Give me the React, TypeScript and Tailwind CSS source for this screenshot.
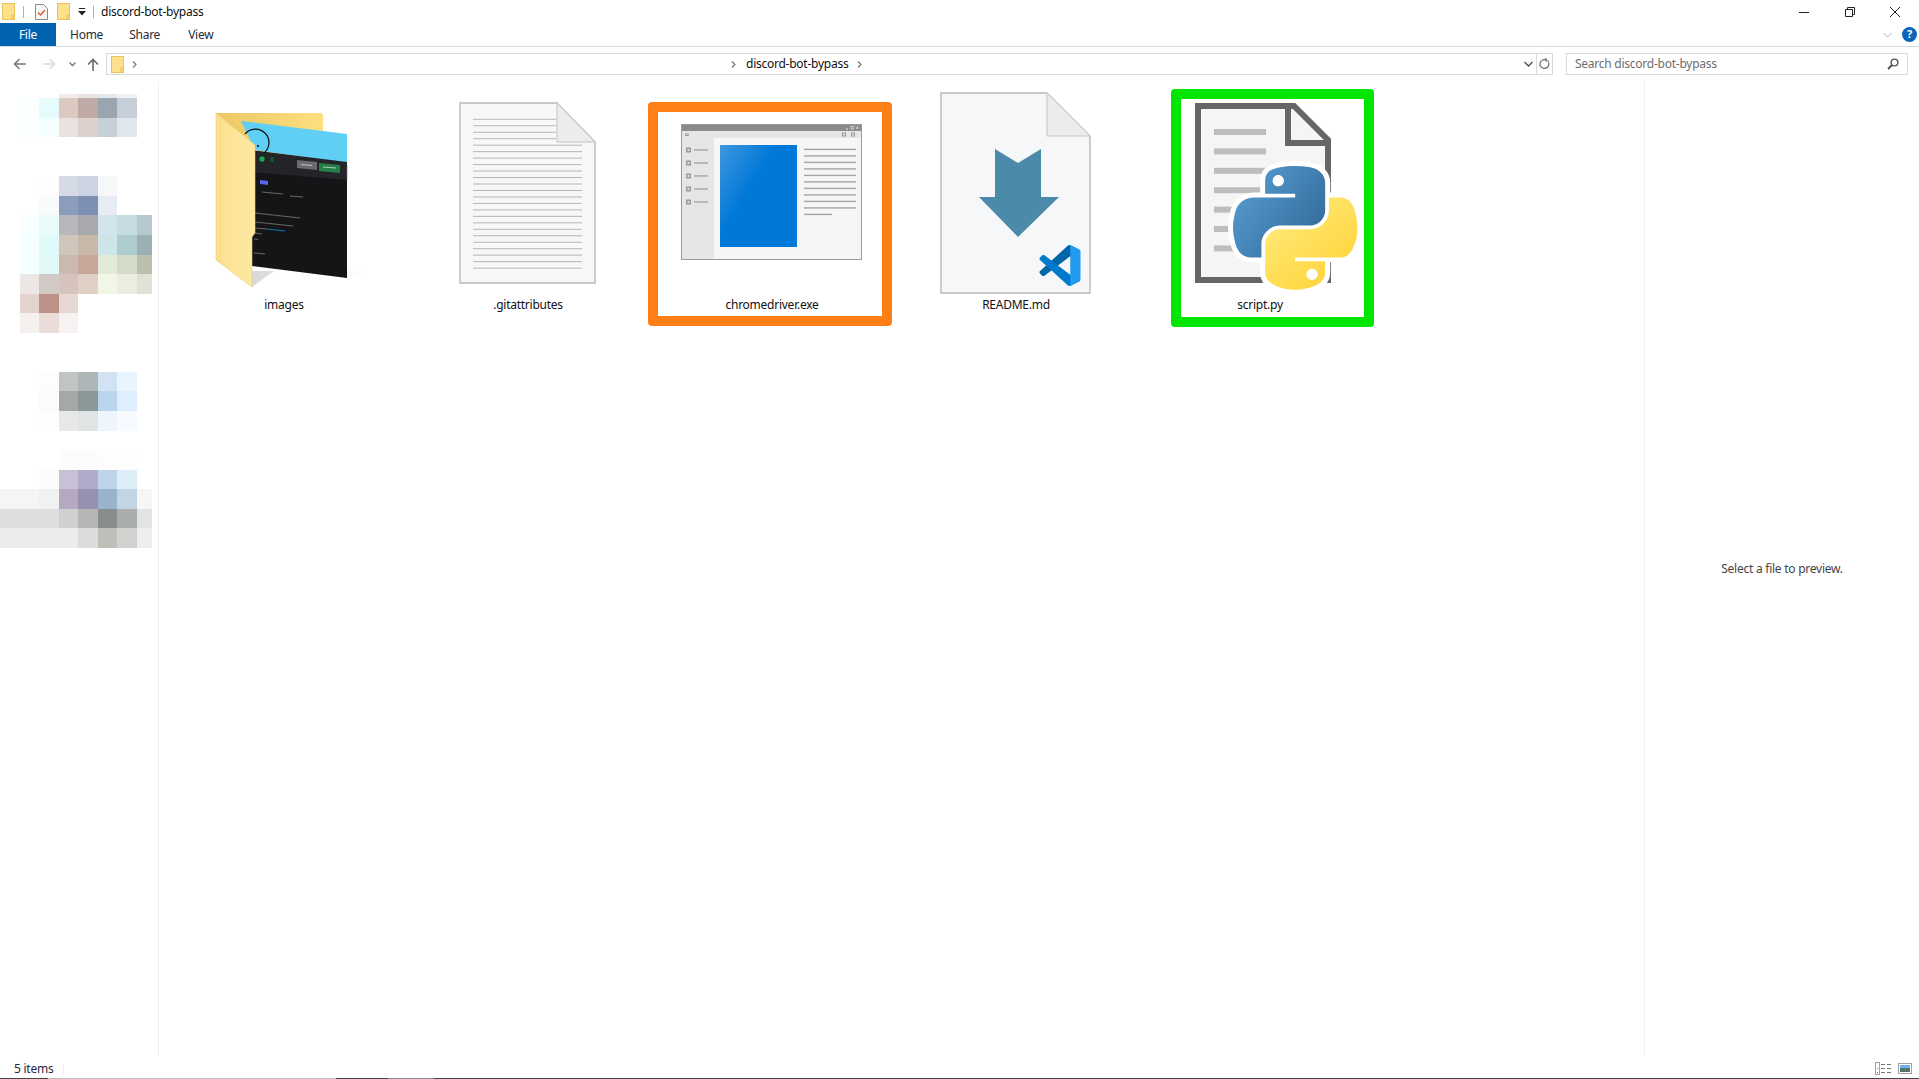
import React from 'react';

// pixelated sidebar: first column is x 0-20, then blocks of ~19.5px
const BLUR_ROWS: string[][] = [
  ['', '', '', '#f3ebe8', '#eae3df', '#e4e8ec', '#f0f1f5', ''],
  ['', '#fbffff', '#e6fbfb', '#dcc9c2', '#bfaaa5', '#9aa5b0', '#c6ced8', ''],
  ['', '#fcffff', '#f5ffff', '#eae2de', '#dcd1cd', '#c8d0d7', '#e0e6ea', ''],
  [],
  [],
  ['', '', '#fdfdfd', '#d5dae6', '#ccd3e2', '#f5f7fb', '', ''],
  ['', '', '#f9fafc', '#8c9cbc', '#7d8fb2', '#e7ebf3', '', ''],
  ['', '#f8ffff', '#e8fbfa', '#b6b8ba', '#a8a9ad', '#d2e5ee', '#c6dce3', '#b5c8cf'],
  ['', '#f5ffff', '#e0fafa', '#d0c6bc', '#c8b8aa', '#cde4e8', '#aecbd0', '#9ab0b3'],
  ['', '#f5ffff', '#e2f9fa', '#cbb8ae', '#c7a898', '#e2ebd7', '#d3dcc6', '#babfae'],
  ['', '#ece6e4', '#d2c9c4', '#d7c3be', '#e1d0c5', '#f2f6e7', '#ebede1', '#e1e2d6'],
  ['', '#e4d4ce', '#bd9288', '#e7d8d6', '', '', '', ''],
  ['', '#f6f1ef', '#eadcd9', '#f7f1f1', '', '', '', ''],
  [],
  [],
  ['', '', '#fdfdfd', '#c0c5c1', '#aeb6b7', '#d1e3f3', '#e9f4fe', ''],
  ['', '', '#fbfbfb', '#a4a9a5', '#8a9797', '#bcd5ee', '#deeefe', ''],
  ['', '', '#fdfdfd', '#e8e8e8', '#e0e4e4', '#eef5fc', '#f7fbff', ''],
  [],
  ['', '', '', '#fcfcfc', '#fcfcfc', '#fdfdfd', '#fdfdfd', ''],
  ['', '', '#fcfcfc', '#c9c0d5', '#b1aac9', '#bdd4ec', '#deeef9', ''],
  ['#f5f5f5', '#f5f5f5', '#f1f1f1', '#b5a9c0', '#9890b0', '#9ab3cc', '#c3d5e2', '#f6f6f6'],
  ['#dedede', '#dedede', '#dedede', '#d0d0d1', '#b6b6b7', '#888d8c', '#a9adac', '#e3e3e3'],
  ['#ececec', '#ececec', '#ececec', '#ececec', '#dcdcda', '#bfbfba', '#d1d1cf', '#eeeeee'],
];

const SmallFolder = () => (
  <svg width="13" height="17" viewBox="0 0 13 17">
    <rect x="0.5" y="0.5" width="12" height="16" fill="#fde08c" stroke="#e8c35a" />
    <rect x="10" y="12" width="2.5" height="4.5" fill="#fbd25f" stroke="#e8c35a" />
  </svg>
);

const TitleBar = () => (
  <div className="flex h-[23px] items-center">
    <div className="ml-[2px]"><SmallFolder /></div>
    <div className="ml-[8px] h-[12px] w-px bg-[#b0b0b0]" />
    <svg className="ml-[11px]" width="13" height="16" viewBox="0 0 13 16">
      <path d="M.5.5h8l4 4v11H.5z" fill="#f7f7f7" stroke="#8a8a8a" />
      <path d="M3 8.5l2.5 2.5L10 6" fill="none" stroke="#e0592a" strokeWidth="1.4" />
    </svg>
    <div className="ml-[9px]"><SmallFolder /></div>
    <svg className="ml-[8px]" width="8" height="8" viewBox="0 0 8 8">
      <rect x="1" y="0" width="6" height="1" fill="#222" />
      <path d="M0 3h8L4 7.5z" fill="#222" />
    </svg>
    <div className="ml-[7px] h-[12px] w-px bg-[#b0b0b0]" />
    <span className="ml-[7px] text-xs text-[#111]">discord-bot-bypass</span>
    <div className="ml-auto flex items-center">
      <svg width="10" height="10" viewBox="0 0 10 10"><path d="M0 5.5h10" stroke="#222" /></svg>
      <svg className="ml-[36px]" width="10" height="10" viewBox="0 0 10 10" fill="none" stroke="#222">
        <path d="M.5 2.5h7v7h-7zM2.5 2.5v-2h7v7h-2" />
      </svg>
      <svg className="ml-[35px] mr-[19px]" width="10" height="10" viewBox="0 0 10 10">
        <path d="M0 0l10 10M10 0L0 10" stroke="#222" />
      </svg>
    </div>
  </div>
);

const RibbonTabs = () => (
  <div className="flex h-[24px] border-b border-[#dadada]">
    <div className="flex h-[23px] w-[56px] items-center justify-center bg-[#0063b1] text-xs text-white">File</div>
    <span className="ml-[14px] flex h-[23px] items-center text-xs text-[#2a2a3a]">Home</span>
    <span className="ml-[26px] flex h-[23px] items-center text-xs text-[#2a2a3a]">Share</span>
    <span className="ml-[28px] flex h-[23px] items-center text-xs text-[#2a2a3a]">View</span>
    <div className="ml-auto flex h-[23px] items-center">
      <svg width="9" height="6" viewBox="0 0 9 6"><path d="M.5 1l4 4 4-4" fill="none" stroke="#b5b5b5" /></svg>
      <div className="ml-[10px] mr-[2px] flex h-[15px] w-[15px] items-center justify-center rounded-full bg-[#0b65b8] text-[11px] font-bold text-white">?</div>
    </div>
  </div>
);

const NavBar = () => (
  <div className="flex h-[34px] items-center">
    <svg className="ml-[13px]" width="13" height="12" viewBox="0 0 13 12" fill="none" stroke="#7a7a7a" strokeWidth="1.6">
      <path d="M13 6H1.5M6.5 1l-5 5 5 5" />
    </svg>
    <svg className="ml-[17px]" width="13" height="12" viewBox="0 0 13 12" fill="none" stroke="#dcdcdc" strokeWidth="1.6">
      <path d="M0 6h11.5M6.5 1l5 5-5 5" />
    </svg>
    <svg className="ml-[13px]" width="7" height="5" viewBox="0 0 7 5" fill="none" stroke="#777" strokeWidth="1.3">
      <path d="M.5.5l3 3 3-3" />
    </svg>
    <svg className="ml-[11px]" width="12" height="13" viewBox="0 0 12 13" fill="none" stroke="#6a6a6a" strokeWidth="1.6">
      <path d="M6 13V1.5M1 6.5l5-5 5 5" />
    </svg>
    <div className="ml-[7px] flex h-[22px] w-[1447px] items-center border border-[#d9d9d9]">
      <div className="ml-[4px]"><SmallFolder /></div>
      <svg className="ml-[8px]" width="5" height="7" viewBox="0 0 5 7" fill="none" stroke="#777" strokeWidth="1.2">
        <path d="M1 .5l3 3-3 3" />
      </svg>
      <svg className="ml-[594px]" width="5" height="7" viewBox="0 0 5 7" fill="none" stroke="#777" strokeWidth="1.2">
        <path d="M1 .5l3 3-3 3" />
      </svg>
      <span className="ml-[10px] text-xs text-[#111]">discord-bot-bypass</span>
      <svg className="ml-[9px]" width="5" height="7" viewBox="0 0 5 7" fill="none" stroke="#777" strokeWidth="1.2">
        <path d="M1 .5l3 3-3 3" />
      </svg>
      <svg className="ml-auto mr-[3px]" width="9" height="6" viewBox="0 0 9 6" fill="none" stroke="#555" strokeWidth="1.5">
        <path d="M.5 1l4 4 4-4" />
      </svg>
      <div className="h-full w-[16px] border-l border-[#d9d9d9] flex items-center justify-center">
        <svg width="11" height="12" viewBox="0 0 11 12" fill="none" stroke="#666" strokeWidth="1.2">
          <path d="M9.5 4.5a4.4 4.4 0 1 1-2-2.3M7 0v3h3" />
        </svg>
      </div>
    </div>
    <div className="ml-[13px] flex h-[22px] w-[342px] items-center border border-[#d9d9d9] pl-[8px] pr-[8px] text-xs text-[#6d6d6d]">
      Search discord-bot-bypass
      <svg className="ml-auto" width="12" height="12" viewBox="0 0 12 12" fill="none" stroke="#555" strokeWidth="1.4">
        <circle cx="7.5" cy="4.5" r="3.4" />
        <path d="M5 7l-4 4" strokeWidth="1.9" />
      </svg>
    </div>
  </div>
);

const Sidebar = () => (
  <div className="w-[159px] shrink-0 border-r border-[#f0f0f0] pt-[13px]">
    <div className="grid grid-cols-[20px_19px_20px_19px_20px_19px_20px_15px] grid-rows-[4px] auto-rows-[19.57px]">
      {BLUR_ROWS.flatMap((row, r) =>
        Array.from({ length: 8 }, (_, c) => (
          <div key={`${r}-${c}`} style={{ backgroundColor: row[c] || 'transparent' }} />
        )),
      )}
    </div>
  </div>
);

// icon drawings use page coordinates through the viewBox of each tile
const FolderIcon = () => (
  <svg width="244" height="216" viewBox="162 81 244 216">
    <defs>
      <linearGradient id="fb" x1="0" x2="1" y1="0" y2="0">
        <stop offset="0" stopColor="#ecc765" />
        <stop offset="1" stopColor="#fedf80" />
      </linearGradient>
      <linearGradient id="ff" x1="0" x2="1" y1="0" y2="0">
        <stop offset="0" stopColor="#fde08c" />
        <stop offset="1" stopColor="#fde9a4" />
      </linearGradient>
      <linearGradient id="fs" x1="0" x2="1" y1="0" y2="0">
        <stop offset="0" stopColor="#d8d8d8" />
        <stop offset="1" stopColor="#ffffff" />
      </linearGradient>
    </defs>
    <path d="M347 278l20-6-20-2zM252 287l22-16h-22z" fill="url(#fs)" />
    <path d="M216 113h105q2 0 2 3v20l-70 60h-37z" fill="url(#fb)" />
    <path d="M241 121l106 13v29l-92-13z" fill="#5fcff5" />
    <path d="M249 150l98 13v115l-95-12z" fill="#141517" />
    <path d="M249 150l98 12v18l-95-8z" fill="#232427" />
    <path d="M245 134a13.5 13.5 0 1 1 19 19" fill="none" stroke="#111" strokeWidth="1.2" />
    <circle cx="258" cy="146" r="1.1" fill="#111" />
    <circle cx="256" cy="152" r="0.9" fill="#111" />
    <circle cx="262" cy="159" r="3.4" fill="#22a559" stroke="#111" />
    <rect x="270.5" y="157" width="3" height="5" fill="#145a35" />
    <path d="M297 160l20 2v8l-20-2z" fill="#6a6b70" />
    <path d="M319 163l21 2v8l-21-2z" fill="#248046" />
    <path d="M301 164.5l11 1M323 167l13 1" stroke="#d8d8d8" strokeWidth="0.8" />
    <path d="M260 180l8 1v4l-8-1z" fill="#5865f2" />
    <path d="M347 165v15" stroke="#666" strokeWidth="0.6" />
    <g stroke="#7c7c7c" strokeWidth="0.8">
      <path d="M262 192l21 2M290 196l13 1" />
      <path d="M255 213l45 5" />
      <path d="M255 222l38 4M255 228l12 1M255 233l7 1M254 239l4 .5M254 253l11 1" />
    </g>
    <path d="M267 229l18 2" stroke="#0a84c8" strokeWidth="0.9" />
    <path d="M216 113l39 32v88l-3 4v50l-36-27z" fill="url(#ff)" stroke="#eccb75" strokeWidth="0.6" />
    <path d="M220 118v144" stroke="#f6d98a" />
  </svg>
);

const DocPage = ({ d, fold }: { d: string; fold: string }) => (
  <>
    <path d={d} fill="#f6f7f8" stroke="#b9b9b9" strokeWidth="1.4" />
    <path d={fold} fill="#ececec" stroke="#c4c4c4" strokeWidth="1" />
  </>
);

const TextIcon = () => (
  <svg width="244" height="216" viewBox="406 81 244 216">
    <DocPage d="M460 103h97l38 39v141H460z" fold="M557 103l38 39h-38z" />
    {Array.from({ length: 24 }, (_, i) => (
      <rect key={i} x="473" y={118.8 + i * 6.47} width={i < 4 ? 83 : 109} height="1" fill="#b7b7b7" />
    ))}
  </svg>
);

const ExeIcon = () => (
  <svg width="244" height="216" viewBox="650 81 244 216">
    <defs>
      <linearGradient id="eb" x1="0" x2="1" y1="0" y2="0.8">
        <stop offset="0" stopColor="#3f97e0" />
        <stop offset="0.45" stopColor="#0078d7" />
      </linearGradient>
    </defs>
    <rect x="681.5" y="124.5" width="180" height="135" fill="#f6f6f6" stroke="#9a9a9a" />
    <rect x="682" y="125" width="179" height="6" fill="#8a8c8c" />
    <rect x="682" y="131" width="179" height="7" fill="#e6e6e6" />
    <rect x="682" y="138" width="32" height="121" fill="#e6e6e6" />
    <rect x="720" y="145" width="77" height="102" fill="url(#eb)" />
    <path d="M685 134h4M685 135.5h4" stroke="#9a9a9a" />
    <rect x="842.5" y="133" width="3" height="3" fill="none" stroke="#999" />
    <rect x="851.5" y="133" width="3" height="3" fill="none" stroke="#999" />
    <path d="M846 129h2" stroke="#e8e8e8" />
    <rect x="851" y="126.5" width="2.5" height="2.5" fill="none" stroke="#e8e8e8" strokeWidth="0.7" />
    <path d="M856 126.5l2.5 2.5m0-2.5l-2.5 2.5" stroke="#e8e8e8" strokeWidth="0.7" />
    {Array.from({ length: 5 }, (_, i) => (
      <g key={i}>
        <rect x="686" y={147.5 + i * 13} width="5" height="5" fill="#999" />
        <rect x="687.5" y={149 + i * 13} width="2" height="2" fill="#e6e6e6" />
        <rect x="694" y={149.3 + i * 13} width="14" height="1.3" fill="#a2a2a2" />
      </g>
    ))}
    {Array.from({ length: 11 }, (_, i) => (
      <rect key={i} x="804" y={148.7 + i * 6.5} width={i === 10 ? 28 : 52} height="1.4" fill="#a5a5a5" />
    ))}
  </svg>
);

const ReadmeIcon = () => (
  <svg width="244" height="216" viewBox="894 81 244 216">
    <DocPage d="M941 93h106l43 43v157H941z" fold="M1047 93l43 43h-43z" />
    <path d="M995 149l23 14 23-14v48h18l-41 40-39-40h16z" fill="#4b8aa8" />
    <g transform="translate(1039.5 245) scale(0.41)">
      <path d="M96.46 10.8L75.86.88C73.47-.27 70.62.21 68.75 2.08L1.3 63.58c-1.81 1.66-1.81 4.51 0 6.16l5.51 5.01c1.49 1.35 3.72 1.45 5.32.24L93.36 13.37C96.09 11.3 100 13.25 100 16.67v-.24c0-2.4-1.38-4.59-3.54-5.63z" fill="#0065a9" />
      <path d="M96.46 89.2l-20.6 9.92c-2.39 1.15-5.24.67-7.11-1.2L1.3 36.42c-1.81-1.66-1.81-4.51 0-6.17l5.51-5c1.49-1.35 3.72-1.45 5.32-.24l81.23 61.62c2.73 2.07 6.64.12 6.64-3.3v.24c0 2.4-1.38 4.59-3.54 5.63z" fill="#007acc" />
      <path d="M75.86 99.13c-2.39 1.15-5.24.66-7.11-1.21 2.31 2.3 6.25.67 6.25-2.59V4.67c0-3.26-3.94-4.89-6.25-2.59 1.87-1.87 4.72-2.35 7.11-1.21l20.6 9.91c2.16 1.04 3.54 3.23 3.54 5.63v67.18c0 2.4-1.38 4.59-3.54 5.63z" fill="#1f9cf0" />
    </g>
  </svg>
);

const PY_BLUE = 'M54.919 0c-4.584.022-8.961.413-12.813 1.095C30.76 3.099 28.7 7.295 28.7 15.032v10.219h26.813v3.406H18.638c-7.793 0-14.616 4.684-16.75 13.594-2.462 10.213-2.571 16.586 0 27.25 1.905 7.938 6.457 13.594 14.25 13.594h9.218v-12.25c0-8.85 7.657-16.656 16.75-16.656h26.782c7.454 0 13.406-6.138 13.406-13.625v-25.531c0-7.266-6.13-12.725-13.406-13.938C64.282.328 59.502-.02 54.918 0zm-14.5 8.22c2.77 0 5.031 2.298 5.031 5.125 0 2.816-2.262 5.093-5.031 5.093-2.78 0-5.031-2.277-5.031-5.093 0-2.827 2.251-5.125 5.03-5.125z';
const PY_YELLOW = 'M85.638 28.657v11.906c0 9.231-7.826 17-16.75 17H42.106c-7.336 0-13.406 6.279-13.406 13.625V96.72c0 7.266 6.319 11.54 13.406 13.625 8.488 2.495 16.627 2.946 26.782 0 6.75-1.955 13.406-5.888 13.406-13.625V86.5H55.513v-3.405H95.7c7.793 0 10.696-5.436 13.406-13.594 2.8-8.399 2.68-16.476 0-27.25-1.926-7.757-5.604-13.594-13.406-13.594H85.638zm-15.063 64.656c2.78 0 5.03 2.278 5.03 5.094 0 2.827-2.25 5.125-5.03 5.125-2.77 0-5.031-2.298-5.031-5.125 0-2.816 2.261-5.094 5.031-5.094z';

const PythonIcon = () => (
  <svg width="244" height="216" viewBox="1138 81 244 216" className="overflow-visible">
    <defs>
      <linearGradient id="pb" x1="0" x2="1" y1="0.1" y2="0.8">
        <stop offset="0" stopColor="#5a9fd4" />
        <stop offset="1" stopColor="#306998" />
      </linearGradient>
      <linearGradient id="py" x1="0.2" x2="0.8" y1="0.2" y2="0.9">
        <stop offset="0" stopColor="#ffe873" />
        <stop offset="1" stopColor="#ffd43b" />
      </linearGradient>
    </defs>
    <path d="M1198 106h96l34 34v140h-130z" fill="#f5f5f5" stroke="#666" strokeWidth="6" />
    <path d="M1288 104v39h40" fill="none" stroke="#666" strokeWidth="6" />
    {Array.from({ length: 7 }, (_, i) => (
      <rect key={i} x="1214" y={129 + i * 19.4} width="52" height="6" fill="#bdbdbd" />
    ))}
    <g transform="translate(1233 166) scale(1.12 1.1)">
      <g fill="#fff" stroke="#fff" strokeWidth="9" strokeLinejoin="round">
        <path d={PY_BLUE} />
        <path d={PY_YELLOW} />
      </g>
      <path d={PY_BLUE} fill="url(#pb)" />
      <path d={PY_YELLOW} fill="url(#py)" />
    </g>
  </svg>
);

type Tile = { name: string; icon: React.ReactNode; frame?: React.ReactNode };

const TILES: Tile[] = [
  { name: 'images', icon: <FolderIcon /> },
  { name: '.gitattributes', icon: <TextIcon /> },
  {
    name: 'chromedriver.exe',
    icon: <ExeIcon />,
    frame: <div className="absolute left-[-2px] top-[21px] h-[224px] w-[244px] rounded-[4px] border-[10px] border-[#ff7f17]" />,
  },
  { name: 'README.md', icon: <ReadmeIcon /> },
  {
    name: 'script.py',
    icon: <PythonIcon />,
    frame: <div className="absolute left-[33px] top-[8px] h-[238px] w-[203px] rounded-[4px] border-[10px] border-[#00e600]" />,
  },
];

const App: React.FC = () => {
  return (
    <div className="flex h-[1079px] w-[1919px] flex-col overflow-hidden bg-white font-['Noto_Sans',sans-serif] tracking-[-0.25px]">
      <TitleBar />
      <RibbonTabs />
      <NavBar />
      <div className="flex h-[975px]">
        <Sidebar />
        <div className="flex min-w-0 flex-1 items-start pl-[3px]">
          {TILES.map((t) => (
            <div key={t.name} className="relative w-[244px] shrink-0">
              {t.icon}
              <div className="h-[16px] text-center text-xs leading-[16px] text-[#111]">{t.name}</div>
              {t.frame}
            </div>
          ))}
        </div>
        <div className="flex w-[275px] shrink-0 items-center justify-center border-l border-[#f0f0f0] text-xs text-[#444]">
          Select a file to preview.
        </div>
      </div>
      <div className="flex h-[22px] items-center pt-[3px]">
        <span className="ml-[14px] text-xs text-[#2a2a3a]">5 items</span>
        <div className="ml-[10px] h-[10px] w-px bg-[#ececec]" />
        <svg className="ml-auto" width="16" height="13" viewBox="0 0 16 13">
          <rect x="0.5" y="0.5" width="4" height="12" fill="#fff" stroke="#a0a0a0" />
          <path d="M6 2.5h4M12 2.5h4M6 6.5h4M12 6.5h4M6 10.5h4M12 10.5h4" stroke="#777" />
          <rect x="2" y="6" width="1" height="1" fill="#3a7bd5" />
          <rect x="2" y="10" width="1" height="1" fill="#d03030" />
        </svg>
        <svg className="ml-[7px] mr-[7px]" width="14" height="11" viewBox="0 0 14 11">
          <rect x="0.5" y="0.5" width="13" height="10" fill="#fff" stroke="#a0a0a0" />
          <rect x="2" y="2" width="10" height="3" fill="#6fb0e8" />
          <rect x="2" y="5" width="10" height="4" fill="#55756a" />
        </svg>
      </div>
      <div className="flex h-px bg-[#444]">
        <div className="ml-[48px] w-[288px] bg-[#bdbdbd]" />
        <div className="ml-[52px] w-[46px] bg-[#8a8a8a]" />
      </div>
    </div>
  );
};

export default App;
